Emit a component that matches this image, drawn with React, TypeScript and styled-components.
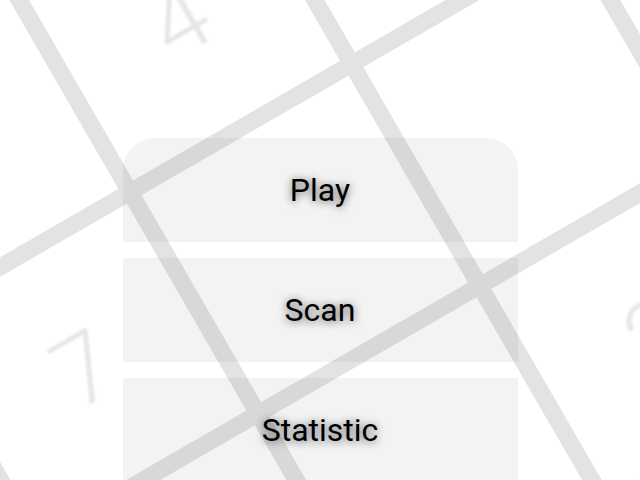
import { FC } from "react";
import styled, { createGlobalStyle } from "styled-components";

const GlobalStyle = createGlobalStyle`
    html, body {
        margin: 0;
        padding: 0;
        background: #ffffff;
    }

    body {
        font-family: Roboto, "Liberation Sans", sans-serif;
    }
`

// board cell size and where the grid origin sits on screen
const CELL = 256;
const ORIGIN_X = 130;
const ORIGIN_Y = 192;

const hints = [
    { col: 0, row: -1, value: '4' },
    { col: -1, row: 0, value: '7' },
    { col: 1, row: 1, value: '2' },
];

const Screen = styled.main`
    position: relative;
    width: 100%;
    min-height: 100vh;
    overflow: hidden;
`

const Board = styled.svg`
    position: absolute;
    inset: 0;
    width: 100%;
    height: 100%;
    pointer-events: none;
`

const Hint = styled.text`
    font-family: Roboto, "DejaVu Sans", sans-serif;
    font-weight: 300;
    font-size: 96px;
    fill: #e6e6e6;
`

const Menu = styled.nav`
    position: relative;
    width: 395px;
    margin: 0 auto;
    padding-top: 138px;
    display: flex;
    flex-direction: column;
    gap: 16px;
`

const MenuButton = styled.button`
    height: 104px;
    border: none;
    background-color: rgba(0, 0, 0, 0.047);
    font-family: Roboto, "Liberation Sans", sans-serif;
    font-size: 32px;
    font-weight: 400;
    color: #000000;
    text-shadow: 0 1px 8px rgba(0, 0, 0, 0.65);
    cursor: pointer;

    &:first-child {
        border-radius: 32px 32px 0 0;
    }
`

const BackgroundBoard: FC = () => {
    const lines = [-3, -2, -1, 0, 1, 2, 3, 4];
    return (
        <Board>
            <defs>
                <filter id="soft" x="-20%" y="-20%" width="140%" height="140%">
                    <feGaussianBlur stdDeviation="1.2" />
                </filter>
            </defs>
            <g transform={`translate(${ORIGIN_X} ${ORIGIN_Y}) rotate(-30)`}>
                {lines.map(k => (
                    <line key={'v' + k}
                        x1={k * CELL} y1={-1200} x2={k * CELL} y2={1200}
                        stroke="#e3e3e3" strokeWidth={17} />
                ))}
                {lines.map(k => (
                    <line key={'h' + k}
                        x1={-1200} y1={k * CELL} x2={1200} y2={k * CELL}
                        stroke="#e3e3e3" strokeWidth={17} />
                ))}
                <g filter="url(#soft)">
                    {hints.map(h => (
                        <Hint key={h.value}
                            x={h.col * CELL + CELL / 2}
                            y={h.row * CELL + CELL / 2 + 36}
                            textAnchor="middle">
                            {h.value}
                        </Hint>
                    ))}
                </g>
            </g>
        </Board>
    )
}

const App: FC = () => {
    return (
        <>
            <GlobalStyle />
            <Screen>
                <BackgroundBoard />
                <Menu>
                    <MenuButton>Play</MenuButton>
                    <MenuButton>Scan</MenuButton>
                    <MenuButton>Statistic</MenuButton>
                </Menu>
            </Screen>
        </>
    )
}

export default App;
